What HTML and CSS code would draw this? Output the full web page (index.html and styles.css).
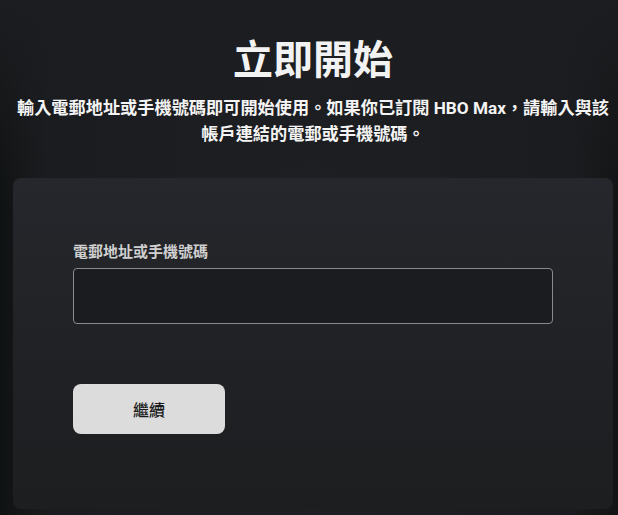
FILE: index.html
```html
<!DOCTYPE html>
<html lang="zh-Hant">
<head>
<meta charset="utf-8">
<link rel="stylesheet" href="styles.css">
</head>
<body>
<div class="page">
  <header class="intro">
    <h1 class="title">立即開始</h1>
    <p class="lead">輸入電郵地址或手機號碼即可開始使用。如果你已訂閱 HBO Max，請輸入與該帳戶連結的電郵或手機號碼。</p>
  </header>
  <section class="card">
    <label class="field-label" for="id">電郵地址或手機號碼</label>
    <input class="field-input" id="id" type="text">
    <button class="btn" type="button">繼續</button>
  </section>
</div>
</body>
</html>
```
FILE: styles.css
```css
html, body {
  margin: 0;
  padding: 0;
  height: 100%;
}
body {
  background: linear-gradient(90deg, #0f1213 0%, #1b1c1f 8%, #1e1f22 50%, #1b1c1f 92%, #121415 100%);
  font-family: Roboto, "Noto Sans CJK TC", sans-serif;
  color: #fff;
  overflow: hidden;
}
.page {
  min-height: 515px;
  background: linear-gradient(180deg, #1c1d20 0%, rgba(28,29,32,0) 40%);
  padding: 0 5px 0 13px;
  box-sizing: border-box;
}
.intro {
  text-align: center;
  padding-top: 34px;
}
.title {
  margin: 0;
  font-size: 40px;
  line-height: 54px;
  font-weight: 700;
  color: #f2f2f2;
}
.lead {
  margin: 7px auto 0;
  max-width: 596px;
  font-size: 17.2px;
  line-height: 26px;
  font-weight: 700;
  color: #f4f4f4;
}
.card {
  margin-top: 31px;
  height: 331px;
  border-radius: 8px;
  background: linear-gradient(180deg, #25272c 0%, #1f2124 60%, #1c1e20 100%);
  padding: 63px 60px 0;
  box-sizing: border-box;
  display: flex;
  flex-direction: column;
  align-items: flex-start;
}
.field-label {
  font-size: 15px;
  line-height: 22px;
  font-weight: 700;
  color: #d0d0d0;
}
.field-input {
  margin-top: 5px;
  width: 480px;
  height: 56px;
  box-sizing: border-box;
  border: 1px solid #8a8a8a;
  border-radius: 4px;
  background: #1b1c1f;
  color: #fff;
  font-family: inherit;
  font-size: 16px;
  padding: 0 12px;
  outline: none;
}
.btn {
  margin-top: 60px;
  width: 152px;
  height: 50px;
  border: none;
  border-radius: 8px;
  background: #dcdcdc;
  color: #1a1a1a;
  font-family: inherit;
  font-size: 16px;
  font-weight: 500;
  cursor: pointer;
}
```
